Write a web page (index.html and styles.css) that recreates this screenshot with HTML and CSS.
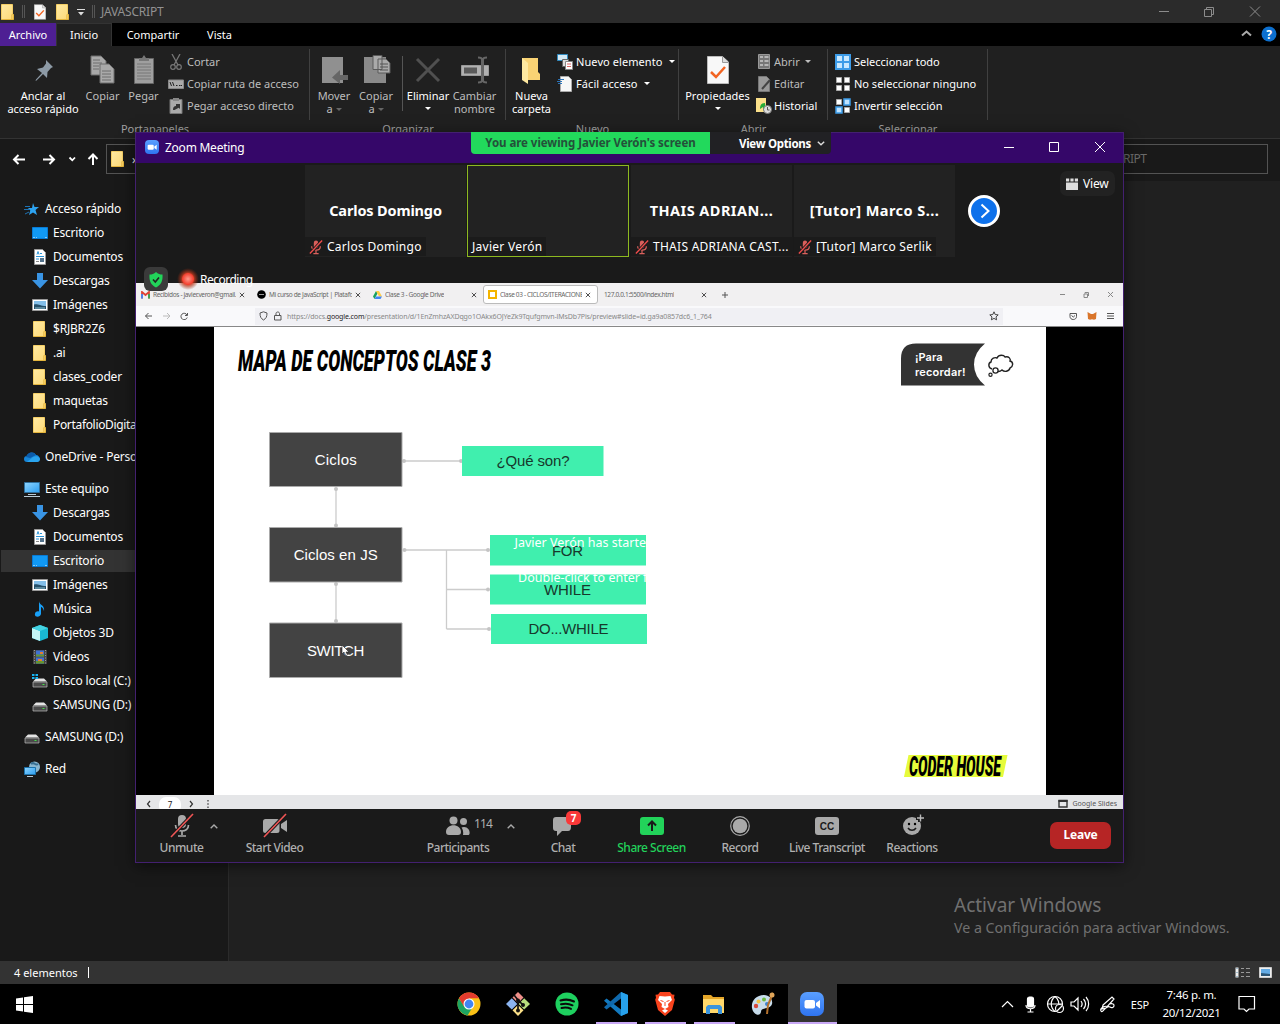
FILE: index.html
```html
<!DOCTYPE html>
<html lang="es">
<head>
<meta charset="utf-8">
<title>JAVASCRIPT</title>
<link rel="stylesheet" href="styles.css">
</head>
<body>
<svg class="defs" width="0" height="0">
  <defs>
    <linearGradient id="gold" x1="0" y1="0" x2="1" y2="1"><stop offset="0" stop-color="#ffeaa3"/><stop offset="1" stop-color="#fdd977"/></linearGradient>
    <linearGradient id="sky" x1="0" y1="0" x2="1" y2="1"><stop offset="0" stop-color="#8fd5ff"/><stop offset="1" stop-color="#2b9df0"/></linearGradient>
    <radialGradient id="rec"><stop offset="0" stop-color="#ff9a8c"/><stop offset=".5" stop-color="#f4402f"/><stop offset=".6" stop-color="#c53a1d" stop-opacity=".75"/><stop offset="1" stop-color="#8a2b12" stop-opacity="0"/></radialGradient>
    <linearGradient id="zoomblue" x1="0" y1="0" x2="0" y2="1"><stop offset="0" stop-color="#5a9fff"/><stop offset="1" stop-color="#2f74f0"/></linearGradient>
  </defs>
  <symbol id="folder" viewBox="0 0 16 16"><path d="M1.500.5h11v10h1.200v5H1.500z" fill="url(#gold)"/><path d="M1.500 15.500h12v-5h-1.600v4.500" fill="none" stroke="#e5b53c"/><path d="M1.500.5h11v10M1.500.5v15" fill="none" stroke="#f5cf66"/></symbol>
  <symbol id="check" viewBox="0 0 22 28"><path d="M.5.5h15l6 5.500v21.500H.5z" fill="#f8f8f8" stroke="#bbb"/><path d="M15.500.5v6h6" fill="#ddd" stroke="#999"/><path d="M4 16l5 5 9-10" fill="none" stroke="#f26422" stroke-width="2.500"/></symbol>
  <symbol id="desk" viewBox="0 0 16 16"><path d="M.5 2.500h15v11H.5z" fill="#1199f5" stroke="#087bd6"/><path d="M1.500 12.500h1M4 12.500h.5M13.500 12.500h1" stroke="#fff"/></symbol>
  <symbol id="doc" viewBox="0 0 16 16"><path d="M2.500.5h8l3 3v12h-11z" fill="#fff" stroke="#9b9b9b"/><path d="M5 5.500l1-3 1 3M8 4.500h2M4 7.500h8M4 10h3" fill="none" stroke="#2793d8"/><path d="M4 12.500h3" stroke="#888"/><path d="M8 9h4v4H8z" fill="#54738c"/></symbol>
  <symbol id="down" viewBox="0 0 16 16"><path d="M5 0h6v7h5l-8 8.500L0 7h5z" fill="#3994e4"/></symbol>
  <symbol id="image" viewBox="0 0 16 16"><path d="M.5 2.500h15v11H.5z" fill="#fff" stroke="#999"/><path d="M2 4h12v8H2z" fill="#84bfe9"/><path d="M2 7.500c4-1 6 1.500 12 1.500v3H2z" fill="#26506a"/><path d="M3 11h10" stroke="#8fc0cf"/></symbol>
  <symbol id="pc" viewBox="0 0 16 16"><path d="M.5 1.500h15v10H.5z" fill="url(#sky)" stroke="#2f6f9c"/><path d="M4 13.500h8M0 15.500h16" stroke="#b8cad6"/></symbol>
  <symbol id="drive" viewBox="0 0 16 16"><path d="M4 5.500h8l3 3H1z" fill="#e4e4e4"/><path d="M1 9h14v5H1z" fill="#4a4a4a" stroke="#bbb" stroke-width=".7"/><path d="M10.500 11.500h2" stroke="#43e048"/></symbol>
  <symbol id="copy" viewBox="0 0 26 30"><g stroke="#6d6d6d" fill="#a9a9a9"><path d="M1 1h10l5 5v14H1z"/><path d="M10 9h9l5 5v14H10z"/><path d="M3 5h7M3 8h9M3 11h6M3 14h6M12 16h9M12 19h9M12 22h9M12 25h9"/></g></symbol>
  <symbol id="mutedmic" viewBox="0 0 16 18"><rect x="5.500" y="1.500" width="5" height="9" rx="2.500" fill="#d9605c"/><path d="M3 8c0 6 10 6 10 0M8 12.500V16M5 16.500h6" stroke="#d9605c" stroke-width="1.400" fill="none"/><path d="M1 16.500L15 1.500" stroke="#1b1b1b" stroke-width="3.500"/><path d="M1 16.500L15 1.500" stroke="#f04c4c" stroke-width="1.500"/></symbol>
  <symbol id="zoomlogo" viewBox="0 0 24 24"><rect width="24" height="24" rx="7" fill="url(#zoomblue)"/><rect x="4.500" y="8" width="10.500" height="8.500" rx="2" fill="#fff"/><path d="M16 11l4-3v8.500l-4-3z" fill="#fff"/></symbol>
  <symbol id="caret" viewBox="0 0 8 5"><path d="M.7 4.200L4 1l3.300 3.200" fill="none" stroke="#aaa" stroke-width="1.400"/></symbol>
  <symbol id="x" viewBox="0 0 7 7"><path d="M1 1l5 5M6 1L1 6" stroke="#333" stroke-width="1" fill="none"/></symbol>
</svg>

<div class="explorer">
  <header class="titlebar">
    <svg class="i16"><use href="#folder"/></svg><i class="bar"></i>
    <svg class="tcheck"><use href="#check"/></svg><svg class="i16"><use href="#folder"/></svg>
    <svg width="8" height="8" class="tdrop"><path d="M0 1.500h8" stroke="#ddd"/><path d="M1 4h6L4 7.500z" fill="#ddd"/></svg><i class="bar"></i>
    <span class="ttext">JAVASCRIPT</span>
    <svg class="winctl" width="104" height="14" fill="none" stroke="#8c8c8c"><path d="M0 6.500h10M45.500 4.500h7v7h-7zM47.500 4V2.500h7v7H53M91 1.500l10 10M101 1.500l-10 10"/></svg>
  </header>
  <nav class="tabs">
    <span class="tab file">Archivo</span><span class="tab on">Inicio</span><span class="tab comp">Compartir</span><span class="tab vista">Vista</span>
    <svg class="help" width="36" height="16"><path d="M1 9.500L5.500 5.500 10 9.500" fill="none" stroke="#aaa" stroke-width="2"/><circle cx="28" cy="8" r="7.500" fill="#0c6fce"/><text x="28" y="12.500" text-anchor="middle" class="q">?</text></svg>
  </nav>
  <section class="ribbon">
    <div class="group g1">
      <div class="tools">
        <div class="big lit w86"><svg viewBox="0 0 32 32"><path d="M20 6l7 7-2 1-3.500 4-.5 6-4-4-6.500 6.500-1 .5.500-1.500L16 19l-5-4 6-1.500 3-4z" transform="translate(-1 0)" fill="#8d9aa6"/></svg><b>Anclar al<br>acceso rápido</b></div>
        <div class="big w34"><svg viewBox="-3 0 32 32"><use href="#copy" width="26" height="30" x="0" y="1"/></svg><b>Copiar</b></div>
        <div class="big w46"><svg viewBox="0 0 32 32"><path d="M6.500 4.500h19v25h-19z" fill="#9f9f9f" stroke="#666"/><path d="M11 4h3l2-3 2 3h3v3H11z" fill="#777"/><path d="M9 10h14M9 13h14M9 16h14M9 19h14M9 22h14M9 25h14" stroke="#777"/></svg><b>Pegar</b></div>
        <div class="list l1">
          <span><svg class="i16" viewBox="0 0 16 16"><path d="M4 0l6 11M12 0L6 11" stroke="#777" stroke-width="1.300"/><circle cx="5" cy="13" r="2.300" fill="none" stroke="#777" stroke-width="1.200"/><circle cx="11" cy="13" r="2.300" fill="none" stroke="#777" stroke-width="1.200"/></svg>Cortar</span>
          <span><svg class="i16" viewBox="0 0 16 16"><path d="M.5 4h15v8.500H.5z" fill="#aaa" stroke="#888"/><path d="M2 6l1.500 4M4.500 6L6 10M8 9.500h1.500M11 9.500h1.500M13 9.500h1" stroke="#222"/></svg>Copiar ruta de acceso</span>
          <span><svg class="i16" viewBox="0 0 16 16"><path d="M2 1.500h12v14H2z" fill="#aaa" stroke="#777"/><path d="M5 0h6v3H5z" fill="#888"/><path d="M5 12c0-3 1-4 3-4V6h4v5l-1.300-1.300L6.500 12z" fill="#333"/></svg>Pegar acceso directo</span>
        </div>
      </div><p>Portapapeles</p>
    </div>
    <div class="group g2">
      <div class="tools">
        <div class="big w48"><svg viewBox="0 0 32 32"><path d="M4 3h21v26H4z" fill="#909090"/><path d="M30 21h-8v-5l-8 7.500 8 6.500v-4h8z" fill="#666"/></svg><b>Mover<br>a<i></i></b></div>
        <div class="big w36"><svg viewBox="0 0 32 32"><path d="M4 3h22v26H4z" fill="#8a8a8a"/><path d="M13 1.500h9v14h-9zM18 5h8l4 4v10H18z" fill="#aaa" stroke="#5b5b5b"/><path d="M20 10h8M20 13h8M20 16h8" stroke="#555"/></svg><b>Copiar<br>a<i></i></b></div>
        <span class="vline"></span>
        <div class="big lit w52"><svg viewBox="0 0 32 32"><path d="M5 5l22 22M27 5L5 27" stroke="#505050" stroke-width="3"/></svg><b>Eliminar<br><i></i></b></div>
        <div class="big w42"><svg viewBox="0 0 32 32"><path d="M2.500 11.500h27v10h-27z" fill="#b0b0b0" stroke="#999"/><path d="M5 13.500h13v6H5z" fill="#5a5a5a"/><path d="M19 3.500c3 0 4 1 4 2v21c0 1-1 2-4 2M28 3.500c-3 0-4 1-4 2v21c0 1 1 2 4 2" stroke="#666" stroke-width="2" fill="none"/></svg><b>Cambiar<br>nombre</b></div>
      </div><p>Organizar</p>
    </div>
    <div class="group g3">
      <div class="tools">
        <div class="big lit w51"><svg viewBox="0 0 32 32"><path d="M6 4h16v14l2 2v6H6z" fill="#f9d374"/><path d="M6 4l6 5v21l-6-4z" fill="#ffe9a0"/></svg><b>Nueva<br>carpeta</b></div>
        <div class="list l3 lit">
          <span><svg class="i16" viewBox="0 0 16 16"><path d="M.5.500h10v6H.5z" fill="#d6eaf5" stroke="#318bc0"/><path d="M5.500 5.500h6v7h-6z" fill="#ddd" stroke="#666"/><path d="M8.500 7.500h7v8h-7z" fill="#fff" stroke="#888"/><path d="M10 10h4M10 12.500h4" stroke="#d66"/></svg>Nuevo elemento<i></i></span>
          <span><svg class="i16" viewBox="0 0 16 16"><path d="M3.500.5h8l3 3v12h-11z" fill="#f7f7f7" stroke="#aaa"/><path d="M1 3.500h6M0 5.500h5M1 7.500h4" stroke="#2c74b9"/></svg>Fácil acceso<i></i></span>
        </div>
      </div><p>Nuevo</p>
    </div>
    <div class="group g4">
      <div class="tools">
        <div class="big lit w77"><svg viewBox="0 0 32 32"><use href="#check" x="5" y="2" width="22" height="28"/></svg><b>Propiedades<br><i></i></b></div>
        <div class="list l4">
          <span><svg class="i16" viewBox="0 0 16 16"><path d="M2.500.5h11v14h-11z" fill="#777" stroke="#999"/><path d="M4 3h3M4 7h3M4 11h3M8.500 3h4M8.500 7h4M8.500 11h4" stroke="#ccc" stroke-width="1.500"/></svg>Abrir<i></i></span>
          <span><svg class="i16" viewBox="0 0 16 16"><path d="M2.500.5h8l3 3v12h-11z" fill="#999" stroke="#777"/><path d="M6 13l8-9" stroke="#444" stroke-width="2"/></svg>Editar</span>
          <span class="lit"><svg class="i16" viewBox="0 0 16 16"><path d="M0 0h10v14H0z" fill="#fbe08a"/><path d="M9 5c-4 0-5 3-5 6l3-2v3l3 2" fill="#27ad38"/><circle cx="11.500" cy="11.500" r="4" fill="#ddd" stroke="#777"/><path d="M11.500 9v3h2" stroke="#555" fill="none"/></svg>Historial</span>
        </div>
      </div><p>Abrir</p>
    </div>
    <div class="group g5">
      <div class="tools">
        <div class="list l5 lit">
          <span><svg class="i16" viewBox="0 0 16 16"><path d="M0 0h16v16H0z" fill="#3d9ce8"/><path d="M2 2h5v5H2zM9 2h5v5H9zM2 9h5v5H2zM9 9h5v5H9z" fill="#c8e8ff"/></svg>Seleccionar todo</span>
          <span><svg class="i16" viewBox="0 0 16 16"><path d="M1.500 1.500h5v5h-5zM9.500 1.500h5v5h-5zM1.500 9.500h5v5h-5zM9.500 9.500h5v5h-5z" fill="#fff" stroke="#aaa"/></svg>No seleccionar ninguno</span>
          <span><svg class="i16" viewBox="0 0 16 16"><path d="M1.500 1.500h5v5h-5zM9.500 9.500h5v5h-5z" fill="#fff" stroke="#aaa"/><path d="M9 1h6v6H9zM1 9h6v6H1z" fill="#bfe3ff" stroke="#3d9ce8" stroke-width="1.500"/></svg>Invertir selección</span>
        </div>
      </div><p>Seleccionar</p>
    </div>
  </section>
  <section class="address">
    <svg width="92" height="16" class="arrows" fill="none" stroke="#fff" stroke-width="2"><path d="M13 8.500H2M6.500 4L2 8.500l4.500 4.500M31 8.500h11M37.500 4l4.500 4.500-4.500 4.500M81 14V3.500M76.500 8L81 3.500 85.500 8"/><path d="M57.500 6.500l2.800 2.800L63 6.500" stroke-width="1.800"/></svg>
    <div class="path"><svg class="i16"><use href="#folder"/></svg><span>›</span></div>
    <div class="search">RIPT</div>
  </section>
  <main class="body">
    <aside class="side">
      <a class="root"><svg viewBox="0 0 16 16"><path d="M9 2l1.500 4H15l-3.500 3 1.500 5-4-2.500L5 14l1.300-4.500L4 7h4z" fill="#2da3f0"/><path d="M1 5.500h5M0 8.500h5M1 13l4-2" stroke="#1d73b4"/></svg>Acceso rápido</a>
      <a><svg><use href="#desk"/></svg>Escritorio</a>
      <a><svg><use href="#doc"/></svg>Documentos</a>
      <a><svg><use href="#down"/></svg>Descargas</a>
      <a><svg><use href="#image"/></svg>Imágenes</a>
      <a><svg><use href="#folder"/></svg>$RJBR2Z6</a>
      <a><svg><use href="#folder"/></svg>.ai</a>
      <a><svg><use href="#folder"/></svg>clases_coder</a>
      <a><svg><use href="#folder"/></svg>maquetas</a>
      <a class="tight"><svg><use href="#folder"/></svg>PortafolioDigita</a>
      <a class="root gap"><svg viewBox="0 0 16 16"><path d="M3 13a3 3 0 0 1 0-6c1-4 7-5 9-1 4 0 5 6 1 7z" fill="#1685d8"/><path d="M2 8c1-5 8-6 10-2l-6 3z" fill="#0b5cab"/><path d="M3 13l6-5c4-2 7 0 7 2s-1 3-3 3z" fill="#2aa4ee"/></svg>OneDrive - Perso</a>
      <a class="root gap"><svg><use href="#pc"/></svg>Este equipo</a>
      <a><svg><use href="#down"/></svg>Descargas</a>
      <a><svg><use href="#doc"/></svg>Documentos</a>
      <a class="sel"><svg><use href="#desk"/></svg>Escritorio</a>
      <a><svg><use href="#image"/></svg>Imágenes</a>
      <a><svg viewBox="0 0 16 16"><path d="M7 0c0 4 6 4 5 10-1-3-2-4-3-4v7c-1 4-7 3-6 0 0-2 2-3 4-2.500z" fill="#18a0f8"/></svg>Música</a>
      <a><svg viewBox="0 0 16 16"><path d="M8 0l8 3v10l-8 3-8-3V3z" fill="#19b9d3"/><path d="M0 3l8 3v10l-8-3z" fill="#c4f5f5"/><path d="M0 3l8-3 8 3-8 3z" fill="#45d3e2"/></svg>Objetos 3D</a>
      <a><svg viewBox="0 0 16 16"><path d="M1 1h14v14H1z" fill="#444"/><path d="M2.500 1v14M13.500 1v14" stroke="#999" stroke-dasharray="1 1.500"/><path d="M4 1.500h8v6H4zM4 8.500h8v6H4z" fill="#4070d0"/><path d="M4 5.500h8v2H4zM4 12h8v2.500H4z" fill="#65962f"/><path d="M8 3h3v2H8zM6 10h4v2H6z" fill="#e47c32"/></svg>Videos</a>
      <a><svg viewBox="0 0 16 16"><use href="#drive" width="16" height="16"/><path d="M0 1h2.500v2H0zM3.500 1H6v2H3.500zM0 4h2.500v2H0zM3.500 4H6v2H3.500z" fill="#18b4f2"/></svg>Disco local (C:)</a>
      <a><svg><use href="#drive"/></svg>SAMSUNG (D:)</a>
      <a class="root gap"><svg><use href="#drive"/></svg>SAMSUNG (D:)</a>
      <a class="root gap"><svg viewBox="0 0 16 16"><circle cx="10.500" cy="6" r="5.500" fill="#8ab6cf"/><path d="M7 3c3-3 4 2 7 0" stroke="#376e91" stroke-width="2" fill="none"/><path d="M.5 6.500h11v7H.5z" fill="url(#sky)" stroke="#1c73ac"/><path d="M3 15.500h6" stroke="#b8cad6"/></svg>Red</a>
    </aside>
    <div class="files"><div class="activate"><h3>Activar Windows</h3><p>Ve a Configuración para activar Windows.</p></div></div>
  </main>
  <footer class="status"><span>4 elementos</span><i></i><svg width="40" height="14"><path d="M1.500 1.500h3v10h-3z" fill="#eee"/><path d="M7 2.500h3M12 2.500h4M7 6.500h3M12 6.500h4M7 10.500h3M12 10.500h4" stroke="#999"/><path d="M3 2v9" stroke="#58a" stroke-dasharray="1 3"/><path d="M25.500 1.500h12v10h-12z" fill="#eee" stroke="#ccc"/><path d="M27 3h9v7h-9z" fill="#64abe4"/><path d="M27 7l9 1v2h-9z" fill="#2c5575"/></svg></footer>
</div>

<div class="taskbar">
  <svg class="start" width="17" height="17" fill="#fff"><path d="M0 2.500l7-1V8H0zM8 1.300L17 0v8H8zM0 9h7v6.500l-7-1zM8 9h9v8l-9-1.300z"/></svg>
  <div class="apps">
    <span><svg viewBox="0 0 24 24"><circle cx="12" cy="12" r="11.500" fill="#fbc116"/><path d="M12 12L2 6.300A11.500 11.500 0 0 1 22 6.300H12z" fill="#e33b2e"/><path d="M2 6.300A11.500 11.500 0 0 0 10.500 23.400L16 14.500 7 14z" fill="#1da462"/><path d="M2 6.300L7 14.500 12 6.300z" fill="#e33b2e"/><circle cx="12" cy="12" r="5.500" fill="#fff"/><circle cx="12" cy="12" r="4.400" fill="#4285f4"/></svg></span>
    <span><svg viewBox="0 0 24 24"><path d="M12 0l5.500 5.500L12 11 6.500 5.500z" fill="#f0908a"/><path d="M5.800 6.300L11.300 12l-5.500 5.500L0 12z" fill="#8bb4ef"/><path d="M18.200 6.300L24 12l-5.800 5.500L12.700 12z" fill="#b7dd7e"/><path d="M12 13l5.500 5.300L12 24l-5.500-5.700z" fill="#fbe088"/><path d="M8 3l4 5v11M12 8l5 5" stroke="#111" stroke-width="1.700" fill="none"/><circle cx="12" cy="8.500" r="2" fill="#111"/><circle cx="12" cy="18.500" r="2" fill="#111"/><circle cx="17" cy="13" r="2" fill="#111"/></svg></span>
    <span><svg viewBox="0 0 24 24"><circle cx="12" cy="12" r="11.500" fill="#1ed05f"/><path d="M5.500 8.500c5-1.500 9.500-1 13.500 1M6 12.300c4.500-1.200 8-.8 11.500 1M6.500 16c4-1 6.500-.6 9.500.9" stroke="#0a0a0a" stroke-width="2" fill="none" stroke-linecap="round"/></svg></span>
    <span class="run"><svg viewBox="0 0 24 24"><path d="M17 0l7 3v18l-7 3L0 8.800 2.500 6.500 17 17.500z" fill="#1279bf"/><path d="M17 0v6.500L2.500 17.500 0 15.200z" fill="#0f69ad"/><path d="M17 0l7 3v18l-7 3z" fill="#27a1ec"/></svg></span>
    <span class="run"><svg viewBox="0 0 24 24"><path d="M7 0h10l2 2.500 2.500.3-.5 3 .8 2L19 18l-7 6-7-6L2.200 7.800l.8-2-.5-3L5 2.500z" fill="#f9431d"/><path d="M12 4.500l5.500-.5 1.500 4-4 4 .5 3-3.500 2-3.500-2 .5-3-4-4L6.500 4zM12 17l3 1.500-3 2.500-3-2.500z" fill="#fff"/><path d="M7.500 8.500l3 1M16.500 8.500l-3 1M12 10v4" stroke="#f9431d"/></svg></span>
    <span class="run"><svg viewBox="0 0 24 24"><path d="M1 3h8l2 2h11v16H1z" fill="#e5a629"/><path d="M1 7h21v14H1z" fill="#ffd76a"/><path d="M4 22v-7l2-2h12l2 2v7h-4v-5H8v5z" fill="#3a93dc"/></svg></span>
    <span><svg viewBox="0 0 24 24"><path d="M13 3C5 3 0 9 1 16c1 6 6 8 8 6s0-4 3-5 8-1 9-5-2-9-8-9z" fill="#c7dceb"/><circle cx="5" cy="14" r="2.200" fill="#d8483a"/><circle cx="7.500" cy="9.500" r="2" fill="#f3c242"/><circle cx="13" cy="7.500" r="2" fill="#6cb940"/><circle cx="16" cy="12" r="2" fill="#3d83cf"/><path d="M22 1l-5 12-1 9" stroke="#b3702c" stroke-width="2" fill="none"/><circle cx="21" cy="3" r="2.500" fill="#dfa55a"/></svg></span>
    <span class="active"><svg><use href="#zoomlogo"/></svg></span>
  </div>
  <div class="tray">
    <svg width="116" height="20" fill="none" stroke="#fff" stroke-width="1.200"><path d="M1 13l5.500-5.500L12 13"/><rect x="26.500" y="3" width="6" height="10" rx="2" fill="#fff"/><path d="M25 11c0 5 9 5 9 0M29.500 15v3M26.500 18h6"/><circle cx="54" cy="10" r="7.500"/><path d="M46.500 10h15M54 2.500c-5 4-5 11 0 15M54 2.500c4 3 4 7 3.500 8"/><circle cx="58.500" cy="14.500" r="4" fill="#000"/><path d="M56 17l5-5M70 8h3l4-4v12l-4-4h-3zM80 7c1.500 2 1.500 4 0 6M82.500 5c2.500 3 2.500 7 0 10M85 3c3.500 4 3.500 10 0 14"/><path d="M102 11l9-8 2 2-8 9-4 1zM108 10c8-2 5 6 1 3s-7 7-9 4 5-6 7-4"/></svg>
    <span class="esp">ESP</span><div class="clock">7:46 p. m.<br>20/12/2021</div>
    <svg width="18" height="18" fill="none" stroke="#fff" stroke-width="1.200"><path d="M1 1.500h15.500v12.500h-5.500l-2.500 2.500-2.500-2.500H1z"/></svg>
  </div>
</div>

<div class="zoom">
  <header class="ztitle"><svg width="14" height="14"><use href="#zoomlogo"/></svg><span>Zoom Meeting</span><svg class="zctl" width="104" height="14" fill="none" stroke="#fff"><path d="M0 7.500h10M45.500 2.500h9v9h-9zM91 2l10 10M101 2L91 12"/></svg></header>
  <div class="banner"><strong>You are viewing Javier Verón's screen</strong><span>View Options<svg width="8" height="5" viewBox="0 0 8 5"><path d="M.8.800L4 3.800 7.200.8" fill="none" stroke="#ddd" stroke-width="1.400"/></svg></span></div>
  <section class="gallery">
    <div class="tile t-first"><h4>Carlos Domingo</h4><p><svg width="14" height="16"><use href="#mutedmic"/></svg>Carlos Domingo</p></div>
    <div class="tile speaking"><p>Javier Verón</p></div>
    <div class="tile"><h4>THAIS ADRIAN...</h4><p><svg width="14" height="16"><use href="#mutedmic"/></svg>THAIS ADRIANA CAST...</p></div>
    <div class="tile"><h4>[Tutor] Marco S...</h4><p><svg width="14" height="16"><use href="#mutedmic"/></svg>[Tutor] Marco Serlik</p></div>
    <svg class="next" width="32" height="32"><circle cx="16" cy="16" r="14.500" fill="#0e71eb" stroke="#fff" stroke-width="3"/><path d="M13.500 9.500l7 6.500-7 6.500" fill="none" stroke="#fff" stroke-width="2"/></svg>
    <div class="view"><svg width="12" height="12" fill="#ddd"><path d="M0 4.500h12V12H0zM0 .5h3.200v3H0zM4.400.5h3.200v3H4.400zM8.800.5H12v3H8.800z"/></svg>View</div>
    <div class="flags"><span><svg width="14" height="16" viewBox="0 0 14 16"><path d="M7 0c2 2 4 2.500 6.500 2.500C14 9 12 13 7 15.500 2 13 0 9 .5 2.500 3 2.500 5 2 7 0z" fill="#22d35a"/><path d="M4 7.500L6.300 10 10 5.500" stroke="#222" stroke-width="1.600" fill="none"/></svg></span><svg width="22" height="22"><circle cx="11" cy="11" r="11" fill="url(#rec)"/></svg><em>Recording</em></div>
  </section>
  <section class="share">
    <div class="fftabs">
      <div class="ft t1"><svg width="9" height="8"><path d="M1 7.500V1l3.500 3L8 1v6.500" fill="none" stroke="#df4335" stroke-width="1.800"/><path d="M1 7.500V3" stroke="#4285f4" stroke-width="1.800"/><path d="M8 7.500V3" stroke="#34a853" stroke-width="1.800"/></svg><b>Recibidos - javier.veron@gmail.</b><svg class="x"><use href="#x"/></svg></div>
      <div class="ft t2"><svg width="9" height="9"><circle cx="4.500" cy="4.500" r="4.300"/><path d="M2 4.500h5" stroke="#999"/></svg><b>Mi curso de JavaScript | Platafo</b><svg class="x"><use href="#x"/></svg></div>
      <div class="ft t3"><svg width="9" height="8"><path d="M3 0L0 5.500 1.500 8 4.500 2.500z" fill="#18a05e"/><path d="M3 0h3l3 5.500H6z" fill="#fc4"/><path d="M1.500 8L3 5.500h6L7.500 8z" fill="#4285f4"/></svg><b>Clase 3 - Google Drive</b><svg class="x"><use href="#x"/></svg></div>
      <div class="ft t4"><svg width="9" height="9"><path d="M1 1h7v7H1z" fill="#fff" stroke="#f4b400" stroke-width="2"/></svg><b>Clase 03 - CICLOS/ITERACIONE</b><svg class="x"><use href="#x"/></svg></div>
      <div class="ft t5"><b>127.0.0.1:5500/index.html</b><svg class="x"><use href="#x"/></svg></div>
      <svg width="8" height="8"><path d="M1 4h6M4 1v6" stroke="#555"/></svg>
      <svg class="ffctl" width="54" height="8" fill="none" stroke="#888"><path d="M0 3.500h5M24 3h3.500v3.500H24zM25 2.500V1.500h3.500V5M48 1l5 5M53 1l-5 5"/></svg>
    </div>
    <div class="ffbar">
      <svg width="44" height="8" fill="none" stroke="#555"><path d="M8 4H1.500M4.500 1L1.500 4l3 3M43.500 1v2.500H41M43 3a3.200 3.200 0 1 0 .2 2.500"/><path d="M19 4h7M23 1l3 3-3 3" stroke="#bbb"/></svg>
      <div class="url"><svg width="24" height="10" fill="none" stroke="#555"><path d="M1 2l3.500-1.200L8 2c0 4-1 5.500-3.500 7C2 7.500 1 6 1 2zM15.500 4.500h6.500v4.500h-6.500zM17 4V2.500c0-2 3.500-2 3.500 0V4"/></svg><b>https://docs.<strong>google.com</strong>/presentation/d/1EnZmhzAXDqgo1OAkx6OJYeZk9Tqufgmvn-lMsDb7Pis/preview#slide=id.ga9a0857dc6_1_764</b><svg class="star" width="10" height="10"><path d="M5 .8l1.200 2.700 3 .4-2.200 2 .6 2.900L5 7.400 2.400 8.800 3 5.900l-2.200-2 3-.4z" fill="none" stroke="#444"/></svg></div>
      <svg class="ext" width="46" height="9" fill="none" stroke="#555"><path d="M1 1.500h6.500v3c0 4-6.500 4-6.500 0zM2.500 3.500l1.800 1.500L6 3.500M38 1.500h7M38 4h7M38 6.500h7"/><path d="M18.500 0L22 2h2L27.500 0l-.5 7-2 .8-2-.5-2 .5-2-.8z" fill="#d9752b" stroke="none"/></svg>
    </div>
    <div class="stage">
      <svg class="slide" width="832" height="468" viewBox="214 327 832 468">
        <text x="238" y="370.800" class="anton" font-size="28.500" textLength="253" lengthAdjust="spacingAndGlyphs">MAPA DE CONCEPTOS CLASE 3</text>
        <path d="M916 343.500h69q-11 9-11 21t11 21h-84v-27q0-15 15-15z" fill="#333"/>
        <g class="remind"><text x="915" y="361" textLength="27.500">¡Para</text><text x="915" y="375.500" textLength="50.500">recordar!</text></g>
        <path d="M992 369c-4-1-4-6-1-7 0-4 4-5 6-4 2-4 7-3 8-1 4-1 6 2 5 4 4 1 3 6 0 7-1 4-6 4-8 2-2 2-6 2-7 0" fill="none" stroke="#222" stroke-width="1.400"/><circle cx="995.500" cy="370.500" r="2.600" fill="#fff" stroke="#222" stroke-width="1.300"/><circle cx="990.500" cy="374.800" r="1.600" fill="#fff" stroke="#222" stroke-width="1.200"/>
        <g fill="none" stroke="#ccc" stroke-width="1.300"><path d="M404 461h57M336 489v37M336 584v37M404 550h85M446.500 550v79M446.500 589.500h42M446.500 629h43"/></g>
        <g fill="#c4c4c4"><circle cx="404" cy="461" r="2"/><circle cx="461" cy="461" r="2"/><circle cx="336" cy="489" r="2"/><circle cx="336" cy="525.500" r="2"/><circle cx="336" cy="584" r="2"/><circle cx="336" cy="621" r="2"/><circle cx="404.500" cy="550" r="2"/><circle cx="488" cy="550" r="2"/><circle cx="488" cy="589.500" r="2"/><circle cx="489" cy="629" r="2"/></g>
        <g fill="#434343" stroke="#aaa"><path d="M269.500 432.500h132.500v54H269.500zM269.500 527.500h132.500v54.500H269.500zM269.500 623h132.500v54.500H269.500z"/></g>
        <g fill="#40efae"><path d="M462 446h141.500v30H462zM490 535h156v30.500H490zM490 574.500h156v30H490zM491 614h156v30H491z"/></g>
        <g class="node"><text x="335.700" y="465" textLength="42">Ciclos</text><text x="335.700" y="560" textLength="84">Ciclos en JS</text><text x="335.700" y="655.500" textLength="57.500">SWITCH</text></g>
        <g class="node dark"><text x="533" y="466" textLength="73">¿Qué son?</text><text x="567.500" y="555.500" textLength="31">FOR</text><text x="567.500" y="595" textLength="47">WHILE</text><text x="568.500" y="634" textLength="80">DO...WHILE</text></g>
        <g class="ghost"><text x="514.500" y="547" textLength="131.500">Javier Verón has starte</text><text x="518" y="582" textLength="122">Double-click to enter</text><text x="643" y="582">f</text></g>
        <path d="M342 645v9l2-2 2 4 1.500-1-1.500-3h3z" fill="#fff" stroke="#222" stroke-width=".6"/>
        <path d="M908.500 755h99l-4.500 22h-99z" fill="#e6fb3b"/>
        <text x="909" y="775.700" class="anton" font-size="27" textLength="92" lengthAdjust="spacingAndGlyphs">CODER HOUSE</text>
      </svg>
    </div>
    <div class="gbar"><svg width="76" height="14" fill="none" stroke="#333" stroke-width="1.200"><path d="M6 6L3.500 9 6 12M46 6l2.500 3L46 12M64 5v1.500M64 8.300v1.500M64 11.500V13"/><rect x="15" y="2" width="22" height="16" rx="7" fill="#fff" stroke="none"/><text x="26" y="12.500" class="pg">7</text></svg><svg class="gs" width="10" height="9"><path d="M1 1.500h8v6.500H1z" fill="none" stroke="#333" stroke-width="1.400"/><path d="M.5 2h9" stroke="#333" stroke-width="2"/></svg><b>Google Slides</b></div>
  </section>
  <footer class="ztools">
    <div class="zt unmute"><svg width="24" height="26" viewBox="0 0 24 26"><rect x="8" y="3" width="8" height="13" rx="4" fill="#a9a9a9"/><path d="M5.500 13c0 8 13 8 13 0M12 19v4M8 24h8" fill="none" stroke="#a9a9a9" stroke-width="1.700"/><path d="M1 25L23 2" stroke="#1a1a1a" stroke-width="3.500"/><path d="M1 25L23 2" stroke="#f05555" stroke-width="1.600"/></svg><b>Unmute</b></div>
    <svg class="car" width="8" height="5"><use href="#caret"/></svg>
    <div class="zt video"><svg width="24" height="26" viewBox="0 0 24 26"><rect x="0" y="7" width="16.500" height="14" rx="2.500" fill="#a9a9a9"/><path d="M18 12l6-4v12l-6-4z" fill="#a9a9a9"/><path d="M1 25L23 2" stroke="#1a1a1a" stroke-width="3.500"/><path d="M1 25L23 2" stroke="#f05555" stroke-width="1.600"/></svg><b>Start Video</b></div>
    <div class="zt part"><svg width="24" height="26" viewBox="0 0 24 26" fill="#a9a9a9"><circle cx="7.500" cy="8.500" r="4"/><circle cx="17.500" cy="9.500" r="3.500"/><path d="M0 20c0-9 15-9 15 0 0 2-1 3-3 3H3c-2 0-3-1-3-3zM17 23h5c3 0 2-8-4-8-1 0-2 .2-2.500.5 1.500 2 2 5 1.500 7.500z"/></svg><i class="cnt">114</i><b>Participants</b></div>
    <div class="cw"><svg width="8" height="5"><use href="#caret"/></svg></div>
    <div class="zt chat"><svg width="24" height="26" viewBox="0 0 24 26"><path d="M5 5h12q3 0 3 3v7q0 4-3 4h-6l-5 5v-5H5q-3 0-3-3V8q0-3 3-3z" fill="#a9a9a9"/></svg><i class="badge">7</i><b>Chat</b></div>
    <div class="zt green"><svg width="24" height="26" viewBox="0 0 24 26"><rect x="0" y="5" width="24" height="18" rx="3" fill="#22d35a"/><path d="M12 19v-8M8 13.500L12 9.500l4 4" fill="none" stroke="#1a1a1a" stroke-width="2"/></svg><b>Share Screen</b></div>
    <div class="zt record"><svg width="24" height="26" viewBox="0 0 24 26"><circle cx="12" cy="14" r="7.300" fill="#a9a9a9"/><circle cx="12" cy="14" r="9.300" fill="none" stroke="#a9a9a9" stroke-width="1.200"/></svg><b>Record</b></div>
    <div class="zt live"><svg width="24" height="26" viewBox="0 0 24 26"><rect x="0" y="5" width="24" height="18" rx="3" fill="#a9a9a9"/><text x="12" y="17.700" class="cc">CC</text></svg><b>Live Transcript</b></div>
    <div class="zt react"><svg width="24" height="26" viewBox="0 0 24 26"><circle cx="12" cy="14" r="9" fill="#a9a9a9"/><circle cx="9" cy="12" r="1.200"/><circle cx="15" cy="12" r="1.200"/><path d="M8 16c2 3 6 3 8 0" fill="none" stroke="#1a1a1a" stroke-width="1.500"/><path d="M16 6h8M20 2v8" stroke="#1a1a1a" stroke-width="4"/><path d="M17 6h7M20.500 2.500v7" stroke="#bbb" stroke-width="1.400"/></svg><b>Reactions</b></div>
    <button class="leave">Leave</button>
  </footer>
</div>
</body>
</html>
```

FILE: styles.css
```css
* { box-sizing: border-box; }
body { margin: 0; width: 1280px; height: 1024px; overflow: hidden; background: #000; color: #fff; font: 12px "Noto Sans", sans-serif; position: relative; }
h3, h4, p { margin: 0; }
svg { display: block; flex: none; }
.defs { position: absolute; }
.i16 { width: 16px; height: 16px; }
.explorer { height: 984px; display: flex; flex-direction: column; }

.titlebar { height: 23px; background: #2b2b2b; display: flex; align-items: center; }
.bar { width: 3px; height: 13px; border: 1px solid #555; border-width: 0 1px; margin: 0 9px 0 6px; }
.tcheck { width: 12px; height: 16px; margin-right: 9px; }
.titlebar .i16 + .tdrop { margin-left: 6px; }
.tdrop + .bar { margin: 0 6px 0 7px; }
.ttext { color: #929292; letter-spacing: -.2px; }
.winctl { margin-left: auto; margin-right: 17px; }

.tabs { height: 23px; background: #000; display: flex; font-size: 11px; line-height: 23px; text-align: center; }
.file { width: 56px; background: #4e1f93; }
.on { width: 56px; background: #202020; border: 1px solid #333; border-bottom: 0; line-height: 22px; }
.comp { width: 82px; }
.vista { width: 51px; }
.help { margin: 3px 3px 0 auto; width: 36px; }
.q { font: bold 12px "Noto Sans", sans-serif; fill: #fff; }

.ribbon { height: 93px; background: #202020; border-bottom: 1px solid #333; display: flex; font-size: 11px; color: #bdbdbd; }
.group { height: 92px; background: linear-gradient(#404040, #404040) 100% 3px / 1px 71px no-repeat; }
.group > p { height: 14px; line-height: 14px; text-align: center; color: #a2a2a2; overflow: hidden; }
.tools { display: flex; height: 76px; }
.g1 { width: 310px; }
.g2 { width: 196px; }
.g3 { width: 173px; }
.g4 { width: 149px; }
.g5 { width: 160px; }
.big { padding-top: 8px; text-align: center; display: flex; flex-direction: column; align-items: center; }
.big svg { width: 32px; height: 32px; }
.big b { font-weight: 400; line-height: 13px; margin-top: 3px; white-space: nowrap; }
.lit { color: #fff; }
.w86 { width: 86px; }
.w34 { width: 33px; }
.w46 { width: 49px; }
.w48 { width: 48px; }
.w36 { width: 36px; }
.w52 { width: 50px; }
.w42 { width: 43px; }
.w51 { width: 51px; }
.w77 { width: 77px; }
.vline { width: 1px; height: 55px; background: #555; margin: 10px 0 0 8px; }
.big b i, .list i { display: inline-block; border: 3px solid transparent; border-top-color: currentColor; border-bottom: 0; margin-left: 3px; vertical-align: 2px; }
.w52 b i, .w77 b i { margin: 0; vertical-align: 3px; }
.big:not(.lit) i { opacity: .45; }
.list { padding-top: 5px; }
.list span { display: flex; align-items: center; height: 22px; padding-bottom: 2px; gap: 3px; white-space: nowrap; }
.list svg { margin-bottom: -2px; }
.l3 { letter-spacing: .08px; }
.l4 span { gap: 2px; }
.l5 { padding-left: 7px; }

.address { height: 42px; padding-bottom: 2px; background: #191919; display: flex; align-items: center; }
.arrows { margin-left: 12px; }
.path { width: 40px; height: 30px; margin-left: 2px; border: 1px solid #535353; display: flex; align-items: center; padding-left: 3px; gap: 6px; }
.search { margin: 0 12px 0 auto; width: 168px; height: 30px; border: 1px solid #535353; padding-left: 22px; line-height: 28px; color: #6b6b6b; letter-spacing: -.5px; }

.body { flex: 1; display: flex; background: #202020; }
.side { width: 229px; background: #191919; border-right: 1px solid #2b2b2b; padding-top: 17px; }
.side a { display: flex; align-items: center; height: 22px; margin: 0 0 2px 1px; padding: 0 0 2px 31px; gap: 5px; white-space: nowrap; letter-spacing: -.2px; }
.side a.root { padding-left: 23px; }
.side a.gap { margin-top: 10px; }
.side a.sel { background: #333; }
.side a.tight { letter-spacing: -.33px; }
.side svg { width: 16px; height: 16px; margin-bottom: -2px; }
.files { flex: 1; display: flex; align-items: flex-end; }
.activate { margin: 0 0 23px 725px; color: #707070; white-space: nowrap; }
.activate h3 { font-weight: 400; font-size: 19px; line-height: 22px; margin-bottom: 2px; }
.activate p { font-size: 14.200px; line-height: 20px; }
.status { height: 23px; background: #333; display: flex; align-items: center; padding-left: 14px; font-size: 11px; }
.status i { width: 1px; height: 11px; background: #fff; margin-left: 10px; }
.status svg { margin-left: auto; margin-right: 6px; }

.taskbar { height: 40px; background: #000; display: flex; align-items: center; }
.start { margin-left: 16px; }
.apps { display: flex; margin-left: 412px; height: 40px; }
.apps span { width: 49px; padding: 8px 13px 0 12px; }
.apps svg { width: 24px; height: 24px; }
.run { background: linear-gradient(#c8a8f5, #c8a8f5) 4px 38px / 41px 2px no-repeat; }
.apps .active { background: #333; border-bottom: 2px solid #c8a8f5; }
.tray { display: flex; align-items: center; margin-left: auto; font-size: 11.500px; }
.esp { margin-left: 14px; font-size: 11px; letter-spacing: -.2px; }
.clock { width: 85px; text-align: center; line-height: 18px; letter-spacing: -.3px; }
.tray > svg:last-child { margin: 0 24px 0 4px; }

.zoom { position: absolute; left: 135px; top: 132px; width: 989px; height: 731px; border: 1px solid #432070; background: #1a1a1a; box-shadow: 0 3px 14px rgba(0,0,0,.55); display: flex; flex-direction: column; }
.ztitle { height: 30px; padding-bottom: 2px; background: #350769; display: flex; align-items: center; padding-left: 9px; gap: 6px; letter-spacing: -.25px; }
.zctl { margin: 0 15px 0 auto; }
.banner { position: absolute; left: 335px; top: -1px; display: flex; height: 22px; line-height: 21px; }
.banner strong { width: 239px; background: #22d95c; color: #24513a; text-align: center; border-radius: 0 0 0 4px; font-size: 11.500px; letter-spacing: -.05px; }
.banner span { width: 121px; background: #212124; font-size: 11.500px; letter-spacing: -.3px; font-weight: 700; display: flex; align-items: center; padding-left: 29px; gap: 6px; border-radius: 0 0 4px 0; white-space: nowrap; }
.gallery { height: 120px; padding: 2px 0 0 169px; display: flex; gap: 2px; position: relative; }
.tile { width: 161px; height: 92px; background: #222; position: relative; }
.speaking { width: 162px; margin-left: -1px; border: 1px solid #8db920; }
.tile h4 { font-size: 14.500px; line-height: 90px; font-weight: 700; text-align: center; white-space: nowrap; letter-spacing: .45px; }
.t-first h4 { letter-spacing: -.15px; }
.tile p { position: absolute; left: 0; bottom: 1px; height: 19px; display: flex; align-items: center; background: #1b1b1b; padding: 0 4px; gap: 4px; white-space: nowrap; letter-spacing: .27px; }
.speaking p { bottom: 0; }
.next { margin: 30px 0 0 11px; }
.view { display: flex; align-items: center; gap: 5px; width: 55px; height: 25px; margin: 6px 8px 0 auto; padding-left: 6px; background: #222; border-radius: 7px; letter-spacing: -.2px; }
.flags { position: absolute; left: 8px; top: 104px; display: flex; align-items: center; height: 24px; }
.flags span { width: 24px; height: 24px; border-radius: 6px; background: #3a3a3a; padding: 5px; margin-right: 9px; }
.flags em { font-style: normal; margin-left: 1px; letter-spacing: -.5px; }

.share { height: 526px; display: flex; flex-direction: column; font-size: 7px; color: #666; }
.share b { font-weight: 400; white-space: nowrap; overflow: hidden; }
.fftabs { height: 23px; background: #f1f0f1; display: flex; align-items: center; font-size: 6.500px; letter-spacing: -.35px; }
.ft { display: flex; align-items: center; height: 19px; gap: 3px; }
.x { width: 6px; height: 6px; margin-left: auto; }
.t1 { width: 104px; margin-left: 5px; }
.t2 { width: 104px; margin-left: 12px; }
.t3 { width: 104px; margin-left: 12px; }
.t4 { width: 115px; margin-left: 6px; padding: 0 6px 0 4px; background: #fff; border: 1px solid #bbb; border-radius: 3px; }
.t5 { width: 103px; margin: 0 14px 0 6px; }
.ffctl { margin: 0 9px 0 auto; }
.ffbar { height: 21px; background: #f9f9fb; border-bottom: 1px solid #888; display: flex; align-items: center; padding-left: 8px; }
.url { width: 748px; height: 17px; margin-left: 67px; background: #f0f0f4; display: flex; align-items: center; padding: 0 4px; gap: 4px; color: #888; letter-spacing: -.12px; }
.url strong { font-weight: 400; color: #222; }
.star { margin-left: auto; }
.ext { margin: 0 8px 0 auto; }
.stage { height: 468px; background: #000; padding-left: 78px; }
.slide { background: #fff; }
.anton { font-family: "Roboto", sans-serif; font-weight: 900; font-style: italic; }
.remind { font: 600 11px "Inter", sans-serif; fill: #fff; }
.node { font: 15px "Liberation Sans", sans-serif; fill: #fff; text-anchor: middle; }
.dark { fill: #17382c; }
.ghost { font: 12.500px "Noto Sans", sans-serif; fill: #fff; }
.gbar { height: 14px; background: #e5e6e8; display: flex; padding: 0 6px 0 8px; color: #555; line-height: 18px; }
.gs { margin: 4px 4px 0 auto; }
.pg { font: 8px "Noto Sans", sans-serif; fill: #222; stroke: none; text-anchor: middle; }

.ztools { height: 53px; display: flex; padding: 0 12px 0 16px; color: #b0b0b0; }
.zt { position: relative; display: flex; flex-direction: column; align-items: center; padding-top: 3px; }
.zt b { font-weight: 500; font-size: 12px; line-height: 16px; margin-top: 2px; letter-spacing: -.5px; white-space: nowrap; }
.unmute { width: 59px; }
.video { width: 115px; }
.part { width: 84px; margin-left: 84px; }
.chat, .record { width: 82px; }
.green { width: 95px; color: #22d35a; }
.live { width: 92px; }
.react { width: 78px; }
.car { margin: 15px -1px 0; }
.cw { width: 22px; padding: 15px 0 0 7px; }
.cnt { position: absolute; left: 58px; top: 7px; font-style: normal; line-height: 16px; letter-spacing: -.9px; }
.badge { position: absolute; left: 44px; top: 2px; width: 15px; height: 14px; border-radius: 5px; background: #fa3838; color: #fff; font: bold 10px/14px "Noto Sans", sans-serif; text-align: center; }
.cc { font: bold 10px "Liberation Sans", sans-serif; fill: #1a1a1a; text-anchor: middle; }
.leave { width: 61px; height: 27px; margin: 13px 0 0 auto; border: 0; border-radius: 7px; background: #b62525; color: #fff; font: 700 12px "Noto Sans", sans-serif; letter-spacing: -.2px; padding: 0 0 2px; }
```
